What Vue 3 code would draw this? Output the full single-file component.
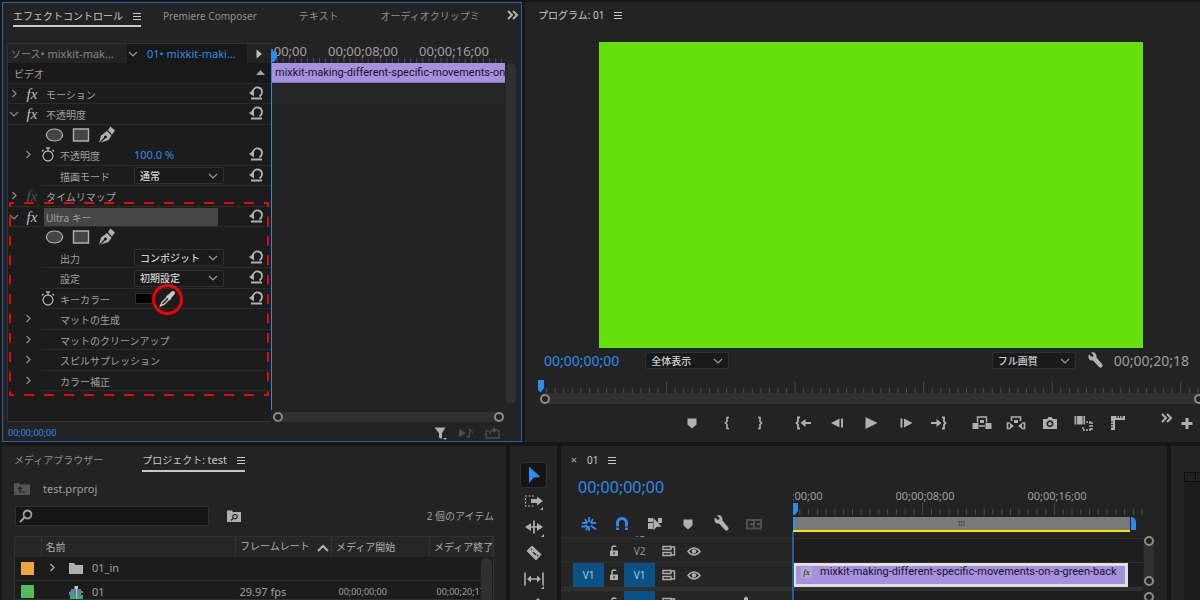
<template>
  <div class="workspace">
    <div class="upper">
      <!-- Effect controls -->
      <section class="panel effects">
        <nav class="tabs">
          <button class="tab active">エフェクトコントロール<Icon name="menu" class="icon tab-menu" /></button>
          <button class="tab">Premiere Composer</button>
          <button class="tab">テキスト</button>
          <button class="tab last">オーディオクリップミキサー</button>
          <button class="btn more"><Icon name="more" class="icon" /></button>
        </nav>

        <div class="fx-body">
          <div class="props">
            <div class="source-row">
              <span class="source">ソース<b>• mixkit-mak…</b></span>
              <button class="source-clip"><Icon name="down" class="icon" /><b>01• mixkit-maki…</b></button>
              <button class="btn source-next"><Icon name="right" class="icon" /></button>
            </div>
            <div class="fx-list">
              <div v-for="(group, g) in groups" :key="g" :class="['fx-group', `fx-group-${g}`]">
                <div v-for="(row, i) in group" :key="i" :class="['fx-row', row.kind]">
                  <template v-if="row.kind === 'title'">
                    <span class="fx-label">{{ row.label }}</span>
                    <span class="reset"><Icon name="collapse" class="icon" /></span>
                  </template>
                  <template v-else-if="row.kind === 'mask'">
                    <button v-for="m in ['ellipse', 'rect', 'pen']" :key="m" class="btn mask-btn"><Icon :name="m" class="icon" /></button>
                  </template>
                  <template v-else>
                    <span class="twirl"><Icon v-if="row.twirl" :name="row.twirl" class="icon" /></span>
                    <span v-if="row.kind === 'effect'" :class="['fx-mark', { dim: row.dim }]">fx</span>
                    <span v-else class="watch"><Icon v-if="row.watch" name="watch" class="icon" /></span>
                    <span :class="['fx-label', { selected: row.selected }]">{{ row.label }}</span>
                    <span v-if="row.kind === 'param'" class="fx-value">
                      <a v-if="row.value" href="#" class="number">{{ row.value }}</a>
                      <label v-if="row.option" class="select">
                        <select :aria-label="row.label"><option>{{ row.option }}</option></select>
                        <Icon name="down" class="icon" />
                      </label>
                      <span v-if="row.color" class="key-color">
                        <button class="swatch" aria-label="キーカラー"></button>
                        <button class="btn dropper"><Icon name="dropper" class="icon" /></button>
                      </span>
                    </span>
                    <button v-if="row.reset" class="btn reset"><Icon name="reset" class="icon" /></button>
                  </template>
                </div>
                <svg v-if="g === 1" class="marquee">
                  <line x1="0" y1="1" x2="100%" y2="1" pathLength="130" />
                  <line x1="0" y1="193" x2="100%" y2="193" pathLength="130" />
                  <line x1="1" y1="0" x2="1" y2="100%" pathLength="100" />
                  <line x1="259" y1="0" x2="259" y2="100%" pathLength="100" />
                </svg>
              </div>
            </div>
          </div>

          <div class="fx-time">
            <svg class="fx-ruler">
              <line v-for="n in 38" :key="n" :x1="n * 6.07" y1="15" :x2="n * 6.07" y2="20" class="tick" />
              <text v-for="(t, i) in times" :key="t" :x="i * 91 + 1" y="13">{{ t }}</text>
              <path d="M0 8h4l2 2v5l-3 4H0z" class="head" />
            </svg>
            <div class="fx-clip">mixkit-making-different-specific-movements-on-a-green-back</div>
            <div class="fx-lane"></div>
            <div class="hscroll"><i class="knob"></i><i class="knob"></i></div>
          </div>
          <div class="vscroll"></div>
        </div>

        <footer class="fx-foot">
          <a href="#" class="small-time">00;00;00;00</a>
          <button v-for="n in ['filter', 'playNote', 'export']" :key="n" :class="['btn', 'foot-btn', n]"><Icon :name="n" class="icon" /></button>
        </footer>
      </section>

      <!-- Program monitor -->
      <section class="panel program">
        <nav class="tabs">
          <button class="tab plain">プログラム: 01<Icon name="menu" class="icon tab-menu" /></button>
        </nav>
        <div class="screen"></div>
        <div class="screen-bar">
          <a href="#" class="time">00;00;00;00</a>
          <label class="select zoom">
            <select aria-label="ズーム"><option>全体表示</option></select>
            <Icon name="down" class="icon" />
          </label>
          <label class="select quality">
            <select aria-label="画質"><option>フル画質</option></select>
            <Icon name="down" class="icon" />
          </label>
          <button class="btn wrench"><Icon name="wrench" class="icon" /></button>
          <span class="duration">00;00;20;18</span>
        </div>
        <svg class="program-ruler">
          <line v-for="n in 77" :key="n" :x1="n * 8.57" :y1="n % 15 ? 8 : 2" :x2="n * 8.57" y2="13" class="tick" />
          <path d="M0 0h6v8l-3 4H2L0 10z" class="head" />
        </svg>
        <div class="hscroll program-scroll"><i class="knob"></i><i class="knob"></i></div>
        <div class="transport">
          <div v-for="(set, i) in transport" :key="i" class="transport-set">
            <button v-for="n in set" :key="n" class="btn"><Icon :name="n" class="icon" /></button>
          </div>
          <button class="btn transport-more"><Icon name="more" class="icon" /></button>
          <button class="btn transport-add"><Icon name="plus" class="icon" /></button>
        </div>
      </section>
    </div>

    <div class="lower">
      <!-- Project bin -->
      <section class="panel project">
        <nav class="tabs">
          <button class="tab">メディアブラウザー</button>
          <button class="tab active">プロジェクト:&nbsp;<b>test</b><Icon name="menu" class="icon tab-menu" /></button>
        </nav>
        <div class="path"><Icon name="upFolder" class="icon dim-icon" /><span>test.prproj</span></div>
        <div class="search-row">
          <label class="search"><Icon name="search" class="icon" /><input type="text" aria-label="検索" /></label>
          <button class="btn"><Icon name="findFolder" class="icon" /></button>
          <span class="count">2 個のアイテム</span>
        </div>
        <div class="bin">
          <table>
            <colgroup><col class="c-tag" /><col /><col class="c-rate" /><col class="c-start" /><col class="c-end" /></colgroup>
            <thead>
              <tr>
                <th></th>
                <th>名前</th>
                <th>フレームレート<Icon name="up" class="icon sort" /></th>
                <th>メディア開始</th>
                <th>メディア終了</th>
              </tr>
            </thead>
            <tbody>
              <tr>
                <td><i class="tag orange"></i></td>
                <td><span class="item"><Icon name="closed" class="icon" /><Icon name="folder" class="icon" />01_in</span></td>
                <td></td><td></td><td></td>
              </tr>
              <tr>
                <td><i class="tag green"></i></td>
                <td><span class="item"><i class="no-twirl"></i><Icon name="sequence" class="icon" />01</span></td>
                <td>29.97 fps</td>
                <td class="tc">00;00;00;00</td>
                <td class="tc">00;00;20;17</td>
              </tr>
            </tbody>
          </table>
          <div class="bin-scroll"></div>
        </div>
      </section>

      <aside class="panel tools">
        <button v-for="(n, i) in tools" :key="n" :class="['btn', 'tool', { on: i === 0 }]"><Icon :name="n" class="icon" /></button>
      </aside>

      <!-- Sequence timeline -->
      <section class="panel timeline">
        <nav class="tabs">
          <button class="btn close">×</button>
          <button class="tab plain">01<Icon name="menu" class="icon tab-menu" /></button>
        </nav>
        <div class="seq-head">
          <div class="seq-tools">
            <a href="#" class="time big">00;00;00;00</a>
            <div class="seq-icons">
              <button v-for="n in seqTools" :key="n" :class="['btn', n]"><Icon :name="n" class="icon" /></button>
            </div>
          </div>
          <div class="seq-time">
            <svg class="seq-ruler">
              <line v-for="n in 40" :key="n" :x1="n * 8.78 - 2" :y1="n % 15 ? 20 : 14" :x2="n * 8.78 - 2" y2="26" class="tick" />
              <text v-for="(t, i) in times" :key="t" :x="i * 132" y="11">{{ t }}</text>
              <path d="M0 14h5v8l-3 4H0z" class="head" />
            </svg>
            <div class="work-bar"><span>III</span></div>
          </div>
        </div>
        <div class="seq-body">
          <div class="tracks">
            <div class="track sliver"><div class="track-head"><span class="target">V3</span></div><div class="lane"></div></div>
            <div v-for="t in tracks" :key="t.name" :class="['track', { on: t.on }]">
              <div class="track-head">
                <button v-if="t.on" class="patch">{{ t.name }}</button>
                <span v-else class="patch-gap"></span>
                <button class="btn lock"><Icon name="lock" class="icon" /></button>
                <button class="target">{{ t.name }}</button>
                <button class="btn sync"><Icon name="sync" class="icon" /></button>
                <button class="btn eye"><Icon name="eye" class="icon" /></button>
              </div>
              <div class="lane">
                <div v-if="t.clip" class="clip"><span class="clip-fx">fx</span><span class="clip-name">{{ t.clip }}</span></div>
              </div>
            </div>
            <div class="divider"></div>
            <div class="track audio">
              <div class="track-head">
                <span class="patch-gap"></span>
                <button class="btn lock"><Icon name="lock" class="icon" /></button>
                <button class="target"></button>
                <button class="btn sync"><Icon name="sync" class="icon" /></button>
                <button class="btn mic"><Icon name="mic" class="icon" /></button>
              </div>
              <div class="lane"></div>
            </div>
          </div>
          <div class="seq-scroll">
            <div class="seq-thumb"><i class="knob"></i><i class="knob"></i></div>
            <div class="seq-thumb rest"><i class="knob"></i></div>
          </div>
        </div>
      </section>

      <aside class="panel meters"><div class="meter"><i></i><i></i></div></aside>
    </div>
  </div>
</template>

<script setup>
import { h } from 'vue'

// f = filled path, l = stroked path, l2 = cut-out strokes, w = stroke width, all on a 20x20 grid
const icons = {
  menu: { l: 'M6 7.5h8M6 10.5h8M6 13.5h8' },
  more: { l: 'M5 6l4 4-4 4M10 6l4 4-4 4', w: 2 },
  down: { l: 'M6 8l4 4 4-4' },
  up: { l: 'M5 13l5-5 5 5', w: 2 },
  closed: { l: 'M8.5 6l3.5 3.5L8.500 13', w: 1.3 },
  right: { f: 'M7.500 5.500L13 10l-5.500 4.500z' },
  collapse: { f: 'M9 12h9l-4.500-5z' },
  ellipse: { f: 'M10.500 4a8 6 0 1 0 .01 0z', l: 'M10.500 4a8 6 0 1 0 .01 0z', fill: '#454545' },
  rect: { f: 'M3.500 4h15v12h-15z', l: 'M3.500 4h15v12h-15z', fill: '#454545', w: 1.4 },
  pen: { f: 'M3 18l2-7.500L11 6l4.500 4.500-3 4.500L5 17.500l4-4a1.500 1.500 0 1 0-1-1zM12 5l2.500-3.500 4.500 4-3 4z' },
  reset: { f: 'M2 9L7 5.500v7z', l: 'M5 9c1-4.500 4-6 6-5.500 4.500.5 5.500 6 1.500 9M4 14.500h11', w: 1.8 },
  watch: { l: 'M11 6a5 5 0 1 0 .01 0zM9 3h4M11 3v3M15.500 5L17 6.500M6.500 5L5 6.500', w: 1.4 },
  dropper: { f: 'M10 6.500l1.500-1 3-3q2-1 3 0t0 3l-3 3-.5 2-1.500.500-3.500-3.500z', l: 'M10.500 8L5 13.500 3.500 17l3.500-1.500L12.500 10', w: 1.4 },
  filter: { f: 'M4.500 4.500h11L12 10v6l-3-1.500V10zM13 15h4l-2 2z' },
  playNote: { f: 'M3 6l7 4-7 4zM11 13.500a1.500 1.500 0 1 0 3 0 1.500 1.500 0 1 0-3 0z', l: 'M13.500 13.500V5c0 2 3 2 3 5' },
  export: { l: 'M7 8H4v7h13V8h-2M8 11c0-3 1-4 4-4', f: 'M11 4l5 3-5 3z', w: 1.5 },
  wrench: { f: 'M4 3.500l3 2.500 1-.5.500-1.500-2.500-2.500c3-1 6 1 5.500 5l5.500 6.500q1.500 1.500 0 3t-3 0L8 9.500c-3 .5-5-1.500-4.500-5z' },
  marker: { f: 'M5.500 5.500h9v6L10 15.500l-4.500-4z' },
  inMark: { l: 'M13 4.500h-2v4L9.500 10l1.500 1.500v4h2', w: 1.6 },
  outMark: { l: 'M8 4.500h2v4l1.500 1.500-1.500 1.500v4H8', w: 1.6 },
  goIn: { l: 'M7 4.500H5v4L3.500 10 5 11.500v4h2M11 10h7', f: 'M7.500 10l5-4v8z', w: 1.8 },
  goOut: { l: 'M13 4.500h2v4l1.500 1.500-1.500 1.500v4h-2M2 10h7', f: 'M12.500 10l-5-4v8z', w: 1.8 },
  back: { f: 'M4 10l8.500-4.500v9zM14 5.500h2v9h-2z' },
  play: { f: 'M4.500 4l12 6-12 6z' },
  forward: { f: 'M17.500 10L9 5.500v9zM5.500 5.500h2v9h-2z' },
  lift: { f: 'M.5 10h6v6h-6zM13.500 10h6v6h-6zM8 7h4v3H8z', l: 'M5.500 9.500V4h9v5.500M7 13h6', w: 1.4 },
  extract: { f: 'M8 7h4v3H8zM4 10l4 3-4 3zM16 10l-4 3 4 3z', l: 'M5.500 8V4h9v4M4 10H1.500v5.500H4M16 10h2.500v5.500H16', w: 1.6 },
  camera: { f: 'M3 6h4l1.500-2h3L13 6h4v10H3zM10 7.300a3.500 3.500 0 1 0 .01 0zM10 9a1.800 1.800 0 1 1-.01 0z' },
  compare: { f: 'M.5 3h10.500v8.500H.5z', l: 'M12 9h6v8H9v-4M16 9v8', w: 1.5, l2: 'M2.500 3v9M9 3v9', w2: 0.8, dash: '2 1' },
  rulers: { f: 'M3 3h14v4H7v10H3z', l2: 'M9 3v2M11.500 3v2M14 3v2M3 9h2M3 11.500h2M3 14h2' },
  plus: { f: 'M8.500 5h3v4h4v3h-4v4h-3v-4h-4V9h4z' },
  upFolder: { f: 'M2 4h5l1.500 1.500H18V16H2z', l2: 'M13 13H8V8M6 10l2-2 2 2' },
  folder: { f: 'M3 5h5l1.500 2H17v9H3z' },
  findFolder: { f: 'M3 4.500h5l1 1.500h8v10H3z', l2: 'M11 8.500a2.200 2.200 0 1 0 .01 0M9.500 12L7 14.500' },
  search: { l: 'M11.500 4.500a4 4 0 1 0 .01 0M8.500 11.500L4 16', w: 1.8 },
  sequence: { parts: [['#5a87a8', 'M3 10l2-1V7h4v4H3zM11 7h4v2h2v2h-6z'], ['#2fae80', 'M4 13h5v4H4zM11 13h6v4h-6z'], ['#5a87a8', 'M3 11h6v2H3zM11 11h4v2h-4z'], ['#c4c4c4', 'M9.500 4h1.500v14H9.500zM8.500 4h3.500v3H8.500z']] },
  select: { f: 'M5 1.500l11.500 10.500-6.500.5L5 18z' },
  trackSelect: { f: 'M7 8h6V5.500l6 4.500-6 4.500V12H7zM19 19v-3l-3 3z', l: 'M10 5H1.500v10H10', dash: '2 1.500' },
  ripple: { f: 'M1 10l6-4v8zM19 10l-6-4v8zM20 20v-3l-3 3z', l: 'M10 3.500v13M4 10h12', w: 1.7 },
  razor: { f: 'M2.500 8L8 2.500l9.500 9-5.500 6z', l2: 'M7 6l1 1M9 9l3 3M13 12l1 1' },
  slip: { l: 'M1 3.500v13M19 3.500v13M4 10h12', f: 'M3 10l4-3.500v7zM17 10l-4-3.500v7zM20 20v-3l-3 3z', w: 1.6 },
  penTool: { f: 'M9 8l5-5 3 3-5 5-7 6z' },
  nest: { l: 'M10 3v5M10 12v5M6 5l2.500 4M14 5l-2.500 4M3 9h5M2.500 12.500H6L8 11M12 9h5M12 11.500l5 4M7 16l2-4', w: 1.8 },
  snap: { l: 'M5.500 16V9c0-6 9-6 9 0v7', w: 3, l2: 'M3.500 13h4M12.500 13h4' },
  linked: { f: 'M3 4h5v4H3zM3 9h5v6H3zM13 4h4v5h-4zM8.500 4l8 8.500-5 .5-3 3.500z' },
  cc: { f: 'M2 5h16v10.500H2z', l2: 'M9 8H5v4.500h4M16 8h-4v4.500h4', w2: 1.8 },
  lock: { f: 'M6 9.500h8V15H6z', l: 'M8 9.500V7q0-2 2-2t2 1', w: 1.5, l2: 'M10 11v2.500' },
  sync: { l: 'M4 5.500h8v3H4zM4 11.500h8v3H4zM12 6h3.500v8H12', w: 1.4 },
  eye: { l: 'M4 10.500q6-7 12 0q-6 7-12 0z', f: 'M10 8.200a2.200 2.200 0 1 0 .01 0z', w: 1.5 },
  mic: { f: 'M8 5q2-3 4 0v7H8z' },
}

const Icon = ({ name }) => {
  const i = icons[name]
  return h('svg', { viewBox: '0 0 20 20', width: 20, height: 20, 'aria-hidden': true }, [
    i.f && h('path', { d: i.f, fill: i.fill || 'currentColor', 'fill-rule': 'evenodd' }),
    i.l && h('path', { d: i.l, fill: 'none', stroke: 'currentColor', 'stroke-width': i.w || 1.2, 'stroke-dasharray': i.dash }),
    i.l2 && h('path', { d: i.l2, fill: 'none', stroke: '#232323', 'stroke-width': i.w2 || 1.2 }),
    ...(i.parts || []).map(([fill, d]) => h('path', { d, fill })),
  ])
}
Icon.props = ['name']

const groups = [
  [
    { kind: 'title', label: 'ビデオ' },
    { kind: 'effect', label: 'モーション', twirl: 'closed', reset: true },
    { kind: 'effect', label: '不透明度', twirl: 'down', reset: true },
    { kind: 'mask' },
    { kind: 'param', label: '不透明度', twirl: 'closed', watch: true, value: '100.0 %', reset: true },
    { kind: 'param', label: '描画モード', option: '通常', reset: true },
    { kind: 'effect', label: 'タイムリマップ', twirl: 'closed', dim: true },
  ],
  [
    { kind: 'effect', label: 'Ultra キー', twirl: 'down', selected: true, reset: true },
    { kind: 'mask' },
    { kind: 'param', label: '出力', option: 'コンポジット', reset: true },
    { kind: 'param', label: '設定', option: '初期設定', reset: true },
    { kind: 'param', label: 'キーカラー', watch: true, color: true, reset: true },
    { kind: 'param', label: 'マットの生成', twirl: 'closed' },
    { kind: 'param', label: 'マットのクリーンアップ', twirl: 'closed' },
    { kind: 'param', label: 'スピルサプレッション', twirl: 'closed' },
    { kind: 'param', label: 'カラー補正', twirl: 'closed' },
  ],
]

const times = ['00;00;00;00', '00;00;08;00', '00;00;16;00']

const transport = [
  ['marker', 'inMark', 'outMark'],
  ['goIn', 'back', 'play', 'forward', 'goOut'],
  ['lift', 'extract', 'camera', 'compare', 'rulers'],
]

const tools = ['select', 'trackSelect', 'ripple', 'razor', 'slip', 'penTool']
const seqTools = ['nest', 'snap', 'linked', 'marker', 'wrench', 'cc']

const tracks = [
  { name: 'V2' },
  { name: 'V1', on: true, clip: 'mixkit-making-different-specific-movements-on-a-green-back' },
]
</script>

<style>
body {
  background: #161616;
}
</style>

<style scoped>
.workspace {
  display: flex;
  flex-direction: column;
  gap: 4px;
  height: 100vh;
  padding: 2px 0 0 2px;
  box-sizing: border-box;
  overflow: hidden;
  background: #161616;
  color: #a0a0a0;
  font: 10px/14px "Noto Sans", "Noto Sans CJK JP", sans-serif;
}
.workspace *, .workspace *::before, .workspace *::after { box-sizing: border-box; }
button, input, select {
  padding: 0;
  border: 0;
  background: none;
  color: inherit;
  font: inherit;
}
a { text-decoration: none; color: #2d8ceb; }
b { font-weight: 400; font-size: 11px; }
.icon { display: block; flex: none; }
.btn {
  display: flex;
  flex: none;
  align-items: center;
  justify-content: center;
  color: #b0b0b0;
}
.panel { background: #232323; min-width: 0; overflow: hidden; }
.upper {
  display: grid;
  flex: none;
  grid-template-columns: minmax(0, 520fr) minmax(0, 675fr);
  gap: 3px;
}
.lower {
  display: grid;
  flex: 1;
  min-height: 0;
  grid-template-columns: minmax(0, 504fr) 47px minmax(0, 606fr) 29px;
  gap: 4px;
}

/* tabs */
.tabs {
  display: flex;
  align-items: stretch;
  gap: 22px;
  height: 24px;
  padding: 0 10px;
  white-space: nowrap;
}
.tab {
  display: flex;
  flex: none;
  align-items: center;
  padding: 3px 20px 0 0;
  border-bottom: 2px solid transparent;
  color: #8f8f8f;
}
.tab.active, .tab.plain { padding: 3px 0 0; color: #c8c8c8; }
.tab.active { border-color: #c8c8c8; }
.tab-menu { margin: 0 -6px 0 4px; }

/* selects */
.select {
  display: flex;
  align-items: center;
  width: 90px;
  height: 17px;
  border: 1px solid #303030;
  border-radius: 2px;
  background: #1a1a1a;
  color: #d0d0d0;
}
.select select { flex: 1; min-width: 0; height: 15px; padding-left: 5px; appearance: none; font-weight: 500; }
.select .icon { color: #9a9a9a; margin-left: -20px; pointer-events: none; }

/* effect controls */
.effects { display: flex; flex-direction: column; border: 1px solid #2069b4; }
.tab.last { flex: 0 1 auto; width: 104px; padding-right: 0; overflow: hidden; }
.more { margin-left: auto; width: 20px; margin-right: -12px; }
.fx-body {
  display: grid;
  grid-template-columns: 264px minmax(0, 1fr) 11px;
  margin: 16px 5px 0 4px;
}
.props {
  border: 1px solid #323232;
  border-right: 0;
  background: #1c1c1c;
  height: 379px;
}
.source-row { display: flex; height: 19px; align-items: center; background: #232323; white-space: nowrap; }
.source { width: 119px; padding-left: 3px; color: #888; }
.source-clip { display: flex; align-items: center; width: 120px; height: 19px; background: #181818; color: #2d8ceb; }
.source-clip .icon { color: #9a9a9a; margin-left: -4px; margin-right: 4px; }
.source-next { width: 23px; color: #c0c0c0; }
.fx-list { display: flex; flex-direction: column; height: 328px; }
.fx-group { position: relative; display: flex; flex-direction: column; flex: 7; }
.fx-group-1 { flex: 9; }
.fx-row {
  display: flex;
  flex: 1 1 0;
  min-height: 0;
  align-items: center;
  background: linear-gradient(#2a2a2a, #2a2a2a) no-repeat right bottom / 100% 1px;
}
.fx-row.param { padding-left: 14px; background-size: calc(100% - 33px) 1px; }
.fx-row.mask { background: none; padding-left: 36px; gap: 6px; }
.fx-row.title { background-color: #181818; }
.fx-row.title .fx-label { padding-left: 6px; }
.twirl { display: flex; justify-content: center; width: 12px; color: #8a8a8a; }
.fx-mark { width: 24px; text-align: center; font: italic 15px/16px "Liberation Serif", serif; color: #c0c0c0; }
.fx-mark.dim { color: #555; }
.watch { display: flex; justify-content: center; width: 26px; color: #aaa; }
.fx-label { padding: 2px 2px 0; line-height: 16px; white-space: nowrap; }
.effect .fx-label { width: 174px; }
.param .fx-label { width: 74px; padding-left: 0; }
.fx-label.selected { background: #464646; }
.fx-value { display: flex; flex: 1; align-items: center; }
.number { font-size: 11px; }
.reset { width: 28px; margin-left: auto; display: flex; justify-content: center; }
.mask-btn { width: 20px; }
.key-color { position: relative; display: flex; align-items: center; }
.swatch { width: 20px; height: 11px; margin-left: 1px; border: 1px solid #303030; background: #000; }
.dropper { width: 24px; height: 20px; color: #c8c8c8; }
.dropper::after {
  content: "";
  position: absolute;
  left: 18px;
  top: -5px;
  width: 31px;
  height: 31px;
  border: 3px solid #f00000;
  border-radius: 50%;
}
.marquee {
  position: absolute;
  left: 1px;
  top: -5px;
  width: 260px;
  height: 194px;
  stroke: #f00000;
  stroke-width: 2;
  stroke-dasharray: 5;
  stroke-dashoffset: 2.5;
  pointer-events: none;
}
.fx-time { position: relative; display: flex; flex-direction: column; }
.fx-time::before {
  content: "";
  position: absolute;
  left: 0;
  top: 14px;
  width: 1px;
  height: 353px;
  background: #2d8ceb;
}
.fx-ruler, .seq-ruler, .program-ruler { display: block; width: 100%; overflow: hidden; }
.fx-ruler { height: 20px; font-size: 13px; }
.tick { stroke: #4c4c4c; stroke-width: 1; }
text { fill: #a0a0a0; text-anchor: middle; }
.head { fill: #2d8ceb; }
.fx-clip {
  height: 20px;
  margin: 0 0 0 1px;
  padding-left: 3px;
  border-bottom: 1px solid #8571b4;
  background: #a791df;
  color: #17131f;
  font: 11px/19px Roboto, "Noto Sans", sans-serif;
  white-space: nowrap;
  overflow: hidden;
}
.fx-lane { flex: 1; border-top: 20px solid #262626; }
.hscroll { display: flex; justify-content: space-between; align-items: center; height: 10px; margin: 0 1px 0 2px; background: #303030; border-radius: 5px; }
.knob { display: block; width: 10px; height: 10px; border: 2px solid #8c8c8c; border-radius: 50%; background: #232323; }
.vscroll { height: 341px; margin: 20px 0 0 1px; border-radius: 5px; background: #303030; }
.fx-foot { display: flex; align-items: center; height: 19px; padding: 2px 16px 0 5px; }
.small-time { margin-right: auto; font-size: 9px; }
.foot-btn { width: 26px; color: #4c4c4c; }
.foot-btn.filter { color: #b0b0b0; }

/* program monitor */
.program { display: flex; flex-direction: column; }
.program .tabs { padding-left: 13px; height: 25px; }
.screen { aspect-ratio: 16 / 9; margin: 15px 57px 0 74px; background: #65e00a; }
.screen-bar { display: flex; align-items: center; height: 25px; padding: 0 11px 0 19px; }
.time { font-size: 14px; line-height: 16px; }
.zoom { width: 84px; margin-left: 26px; }
.quality { width: 84px; margin-left: auto; }
.wrench { width: 20px; }
.screen-bar .wrench { margin: 0 9px; }
.duration { font-size: 14px; line-height: 16px; }
.program-ruler { height: 13px; margin: 7px 0 0 13px; width: calc(100% - 13px); }
.program-scroll { height: 11px; margin: 0 -4px 0 15px; }
.transport { display: flex; gap: 9px; align-items: center; height: 37px; padding-left: 150px; }
.transport-set { display: flex; }
.transport-set .btn { width: 34px; }
.transport-more { width: 20px; margin: -10px -9px 0 auto; }
.transport-add { width: 20px; margin-right: 3px; }

/* project */
.project { display: flex; flex-direction: column; }
.project .tabs { height: 26px; padding-left: 12px; gap: 19px; }
.path { display: flex; align-items: center; gap: 11px; height: 34px; padding-left: 10px; font-size: 11px; }
.dim-icon { color: #555; }
.search-row { display: flex; align-items: center; height: 20px; padding: 0 12px 0 13px; }
.search { display: flex; align-items: center; width: 194px; height: 20px; margin-right: 15px; border: 1px solid #303030; border-radius: 2px; background: #161616; }
.search input { flex: 1; min-width: 0; outline: 0; }
.count { margin-left: auto; }
.bin { position: relative; flex: 1; margin: 10px 12px 0; background: #1c1c1c; border: 1px solid #303030; overflow: hidden; }
table { width: 100%; table-layout: fixed; border-collapse: collapse; }
.c-tag { width: 26px; }
.c-rate { width: 96px; }
.c-start { width: 98px; }
.c-end { width: 63px; }
th { height: 20px; padding: 0 0 0 4px; border-right: 1px solid #333; background: #262626; font-weight: 400; text-align: left; color: #b0b0b0; white-space: nowrap; overflow: hidden; }
.sort { display: inline-block; margin: -3px 0 -3px 3px; vertical-align: middle; }
td { height: 23px; padding: 0 0 0 4px; border-bottom: 1px solid #2c2c2c; font-size: 11px; white-space: nowrap; overflow: hidden; }
td:first-child { padding-left: 6px; }
td.tc { padding-left: 7px; font-size: 9px; }
.tag { display: block; width: 13px; height: 13px; }
.orange { background: #efa73a; }
.green { background: #53bb5b; }
.item { display: flex; align-items: center; }
.item .icon { color: #b0b0b0; }
.item .icon:first-child { margin: 0 4px 0 -3px; }
.item .icon:last-child { margin-right: 6px; }
.no-twirl { width: 21px; }
.bin-scroll { position: absolute; right: 1px; top: 21px; bottom: 0; width: 11px; border-radius: 5px 5px 0 0; background: #303030; }

/* tools */
.tools { display: flex; flex-direction: column; align-items: center; padding-top: 16px; }
.tool { width: 27px; height: 26px; border: 1px solid transparent; }
.tool.on { border-color: #303030; border-radius: 3px; background: #141414; color: #2d8ceb; }

/* timeline */
.timeline { display: flex; flex-direction: column; }
.timeline .tabs { height: 26px; gap: 10px; }
.close { width: 6px; padding-top: 2px; font-size: 11px; }
.seq-head { display: grid; flex: none; grid-template-columns: 232px minmax(0, 1fr); height: 64px; padding-right: 24px; }
.big { display: block; height: 30px; padding-left: 17px; font-size: 16px; line-height: 30px; }
.seq-icons { display: flex; height: 34px; align-items: flex-end; padding-left: 11px; }
.seq-icons .btn { width: 33px; height: 25px; }
.seq-icons .nest, .seq-icons .snap { color: #2d8ceb; }
.seq-icons .cc { color: #505050; }
.seq-time { padding-top: 17px; }
.seq-ruler { height: 27px; font-size: 11px; }
.work-bar { position: relative; width: calc(100% - 13px); height: 15px; margin-top: 1px; border-bottom: 2px solid #f3e600; background: #7a7a7a; text-align: center; color: #333; font-size: 7px; line-height: 13px; }
.work-bar::before { content: ""; position: absolute; left: 0; top: 0; width: 2px; height: 13px; background: #2d8ceb; }
.work-bar::after { content: ""; position: absolute; right: -6px; top: 0; width: 5px; height: 13px; border-radius: 0 5px 0 0; background: #2d8ceb; }
.seq-body { display: flex; flex: 1; min-height: 0; }
.tracks { position: relative; flex: 1; min-width: 0; }
.tracks::after { content: ""; position: absolute; left: 231px; top: -4px; bottom: 0; width: 2px; background: #235f99; }
.track { display: grid; grid-template-columns: 232px minmax(0, 1fr); height: 24px; border-bottom: 1px solid #303030; }
.track-head { display: flex; padding-left: 12px; background: #252525; overflow: hidden; }
.lane { padding-right: 15px; background: #1e1e1e; }
.track.sliver { height: 3px; }
.track.sliver .target { margin: -10px 0 0 51px; }
.patch, .patch-gap { width: 31px; }
.target { width: 31px; text-align: center; color: #9a9a9a; }
.lock { width: 20px; }
.sync { width: 27px; }
.eye { width: 24px; }
.mic { width: 20px; margin-left: 54px; }
.track.on .patch, .track.on .target, .audio .target { background: #0a5286; color: #b9c8d5; }
.clip { display: flex; height: 24px; border: 3px solid #e0e0e0; background: #a791df; color: #17131f; font: 11px/11px Roboto, "Noto Sans", sans-serif; overflow: hidden; white-space: nowrap; }
.clip-fx { flex: none; width: 11px; height: 11px; margin: 1px 8px 0 5px; background: #b4a6cc; font: italic 9px/10px "Liberation Serif", serif; text-align: center; }
.divider { height: 4px; background: #303030; }
.seq-scroll { display: flex; flex: none; flex-direction: column; width: 24px; padding-left: 1px; gap: 6px; }
.seq-thumb { display: flex; flex: none; flex-direction: column; justify-content: space-between; width: 10px; height: 50px; border-radius: 5px; background: #303030; }

/* audio meters */
.meters { padding: 26px 0 0 13px; }
.meter { display: grid; grid-template-columns: 11px 1fr; height: 100%; background: linear-gradient(#232323 9px, #1c1c1c 9px); }
.meter i { height: 10px; border: 1px solid #0c0c0c; border-right: 0; }
</style>
